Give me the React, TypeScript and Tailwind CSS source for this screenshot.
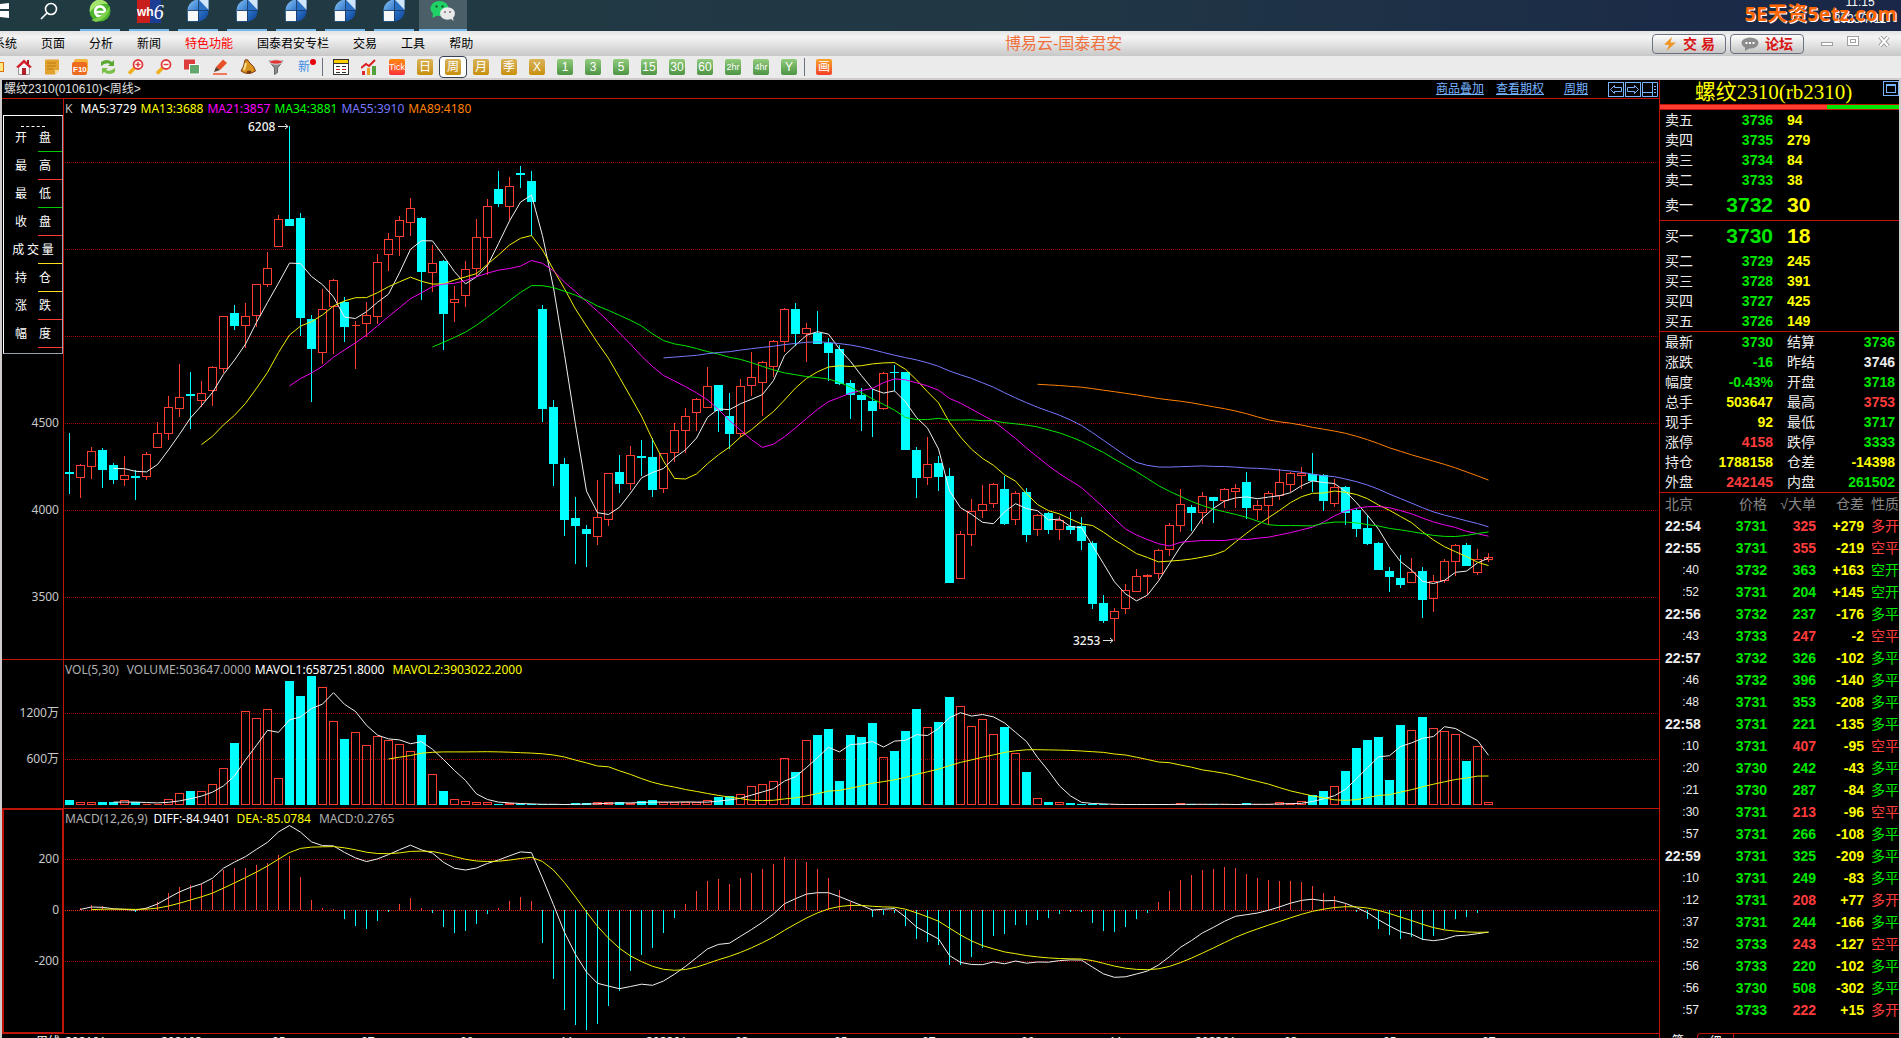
import React from 'react';

// direction (1 = up, 0 = down), high, body top, body bottom, low, volume bar height.
// All prices are rows measured from the top of the price pane.
const bars: number[][] = [
  [0, 333, 372, 374, 394, 5], [1, 364, 365, 378, 398, 3], [1, 347, 351, 367, 379, 3], [0, 348, 350, 370, 388, 3],
  [0, 363, 365, 380, 384, 3], [1, 356, 375, 380, 386, 5], [0, 370, 376, 378, 400, 3], [1, 352, 354, 377, 380, 1],
  [1, 322, 333, 348, 348, 1], [1, 296, 307, 334, 340, 6], [1, 264, 297, 309, 317, 12], [0, 272, 294, 296, 329, 14],
  [1, 281, 293, 301, 307, 14], [1, 266, 267, 291, 306, 21], [1, 216, 216, 269, 273, 37], [0, 205, 213, 226, 230, 62],
  [1, 203, 216, 226, 248, 94], [1, 184, 184, 216, 227, 87], [1, 152, 168, 185, 187, 96], [1, 115, 119, 147, 147, 27],
  [0, 26, 119, 126, 126, 124], [0, 113, 118, 218, 236, 109], [0, 215, 219, 249, 302, 129], [1, 189, 209, 253, 264, 118],
  [1, 179, 180, 207, 254, 84], [0, 197, 202, 227, 242, 66], [1, 221, 225, 226, 269, 73], [1, 202, 215, 224, 237, 60],
  [1, 154, 162, 217, 224, 69], [1, 133, 139, 155, 171, 65], [1, 116, 120, 137, 156, 61], [1, 98, 108, 123, 136, 54],
  [0, 117, 118, 172, 200, 70], [1, 145, 163, 173, 192, 31], [0, 160, 161, 214, 250, 14], [1, 186, 199, 203, 222, 6],
  [1, 161, 169, 196, 207, 4], [1, 119, 137, 169, 176, 3], [1, 99, 106, 138, 175, 3], [0, 71, 89, 104, 107, 1],
  [1, 77, 86, 107, 120, 2], [0, 66, 73, 75, 88, 1], [0, 71, 81, 102, 136, 1], [0, 205, 209, 309, 322, 1],
  [0, 300, 307, 364, 386, 1], [0, 358, 364, 420, 436, 1], [0, 397, 418, 426, 464, 2], [0, 425, 429, 434, 467, 2],
  [1, 380, 417, 437, 445, 3], [1, 373, 373, 420, 426, 3], [0, 355, 372, 384, 393, 3], [1, 346, 355, 384, 390, 2],
  [0, 340, 356, 358, 376, 4], [0, 338, 357, 390, 397, 5], [1, 353, 353, 389, 393, 3], [1, 323, 330, 353, 362, 3],
  [1, 308, 316, 331, 353, 3], [1, 298, 299, 313, 331, 3], [1, 267, 286, 308, 308, 5], [0, 285, 285, 311, 332, 8],
  [0, 293, 316, 334, 349, 9], [1, 279, 286, 334, 337, 11], [1, 252, 277, 286, 296, 19], [1, 261, 262, 283, 316, 21],
  [1, 240, 241, 267, 277, 24], [1, 208, 209, 242, 252, 47], [0, 203, 209, 234, 246, 33], [1, 223, 228, 234, 262, 65],
  [0, 211, 233, 244, 244, 70], [0, 238, 243, 253, 281, 76], [0, 245, 249, 284, 285, 24], [0, 280, 283, 295, 319, 70],
  [0, 288, 295, 300, 331, 68], [0, 289, 301, 311, 337, 82], [1, 272, 273, 309, 310, 48], [0, 265, 272, 273, 291, 54],
  [0, 272, 272, 350, 350, 74], [0, 347, 350, 378, 398, 96], [1, 337, 364, 378, 385, 78], [0, 356, 363, 377, 391, 83],
  [0, 368, 376, 483, 483, 108], [1, 431, 434, 479, 479, 99], [1, 399, 411, 435, 446, 79], [1, 385, 404, 411, 418, 86],
  [1, 383, 384, 404, 408, 71], [0, 376, 389, 424, 425, 78], [1, 391, 393, 420, 425, 52], [0, 388, 392, 435, 442, 33],
  [1, 414, 415, 430, 436, 7], [0, 412, 413, 430, 434, 3], [1, 416, 420, 430, 440, 3], [0, 412, 426, 430, 434, 2],
  [0, 417, 426, 441, 450, 1], [0, 441, 443, 504, 509, 1], [0, 495, 503, 521, 523, 1], [1, 508, 511, 519, 541, 1],
  [1, 484, 490, 509, 514, 1], [1, 469, 476, 492, 492, 1], [1, 474, 475, 477, 495, 1], [1, 449, 450, 474, 479, 1],
  [1, 423, 425, 450, 456, 1], [1, 389, 404, 426, 432, 2], [0, 405, 407, 413, 431, 1], [1, 392, 396, 413, 424, 1],
  [0, 397, 397, 401, 423, 1], [1, 388, 389, 401, 408, 1], [1, 384, 388, 392, 408, 1], [0, 372, 382, 408, 419, 2],
  [1, 400, 405, 410, 420, 1], [1, 391, 393, 406, 425, 1], [1, 369, 382, 396, 400, 3], [1, 372, 373, 385, 392, 2],
  [1, 367, 373, 376, 389, 4], [0, 353, 374, 381, 392, 10], [0, 374, 375, 401, 411, 14], [1, 379, 387, 404, 407, 19],
  [0, 386, 387, 413, 425, 34], [0, 408, 410, 429, 437, 57], [0, 415, 428, 444, 445, 65], [0, 442, 443, 470, 470, 68],
  [0, 467, 471, 477, 492, 25], [0, 455, 478, 485, 488, 80], [1, 458, 472, 483, 483, 75], [0, 467, 471, 500, 518, 88],
  [1, 475, 481, 499, 512, 77], [1, 459, 461, 481, 483, 74], [1, 444, 445, 462, 476, 71], [0, 443, 445, 466, 466, 44],
  [1, 449, 459, 473, 475, 59], [1, 453, 457, 460, 462, 3],
];

const STEP = 11;
const UP = '#ff3c32';
const DOWN = '#00ffff';
const VOL_BASE = 145;
const MACD_ZERO = 101;

const barX = (i: number) => 5 + i * STEP;
const closes = bars.map((b) => (b[0] ? b[2] : b[3]));
const volumes = bars.map((b) => b[5]);

const sma = (values: number[], n: number, toY: (v: number) => number) => {
  const points: string[] = [];
  for (let i = n - 1; i < values.length; i++) {
    const sum = values.slice(i - n + 1, i + 1).reduce((a, b) => a + b, 0);
    points.push(`${barX(i) + 0.5},${(toY(sum / n) + 0.5).toFixed(1)}`);
  }
  return points.join(' ');
};

const ema = (values: number[], n: number) => {
  const out = [values[0]];
  for (let i = 1; i < values.length; i++) {
    out.push((values[i] * 2 + out[i - 1] * (n - 1)) / (n + 1));
  }
  return out;
};

// the MACD pane is drawn at a larger scale than the price pane
const fast = ema(closes, 12);
const slow = ema(closes, 26);
const diff = fast.map((v, i) => (slow[i] - v) * 1.4655);
const dea = ema(diff, 9);
const macd = diff.map((v, i) => (v - dea[i]) * 2);

const toLine = (values: number[], from: number) =>
  values
    .map((v, i) => `${barX(i) + 0.5},${(MACD_ZERO + 0.5 - v).toFixed(1)}`)
    .slice(from)
    .join(' ');

const averages = [
  { n: 5, color: '#f0f0f0' },
  { n: 13, color: '#f0f000' },
  { n: 21, color: '#f000f0' },
  { n: 34, color: '#00e600' },
  { n: 55, color: '#7878ff' },
  { n: 89, color: '#ff8000' },
];

const menus = ['系统', '页面', '分析', '新闻', '特色功能', '国泰君安专栏', '交易', '工具', '帮助'];
const yellowPeriods = ['日', '周', '月', '季', 'X'];
const greenPeriods = ['1', '3', '5', '15', '30', '60', '2hr', '4hr', 'Y'];

const fields = [
  { name: '开　盘', line: 'bg-[#00c800]' },
  { name: '最　高', line: 'bg-[#ff3c32]' },
  { name: '最　低', line: 'bg-[#00c800]' },
  { name: '收　盘', line: 'bg-[#ff3c32]' },
  { name: '成 交 量', line: 'bg-yellow-300' },
  { name: '持　仓', line: 'bg-yellow-300' },
  { name: '涨　跌', line: 'bg-[#ff3c32]' },
  { name: '幅　度', line: 'bg-[#ff3c32]' },
];

const dates: [number, string][] = [
  [1, '202101'], [97, '202103'], [208, '05'], [297, '07'], [396, '09'], [496, '11'], [582, '202201'], [671, '03'],
  [770, '05'], [858, '07'], [957, '09'], [1045, '11'], [1131, '202301'], [1220, '03'], [1319, '05'], [1418, '07'],
];

const G = 'text-[#00e600]';
const R = 'text-[#ff3c3c]';
const Y = 'text-[#ffff00]';
const W = 'text-[#ececec]';

const asks = [['卖五', '3736', '94'], ['卖四', '3735', '279'], ['卖三', '3734', '84'], ['卖二', '3733', '38']];
const bids = [['买二', '3729', '245'], ['买三', '3728', '391'], ['买四', '3727', '425'], ['买五', '3726', '149']];

const stats = [
  ['最新', '3730', G, '结算', '3736', G],
  ['涨跌', '-16', G, '昨结', '3746', W],
  ['幅度', '-0.43%', G, '开盘', '3718', G],
  ['总手', '503647', Y, '最高', '3753', R],
  ['现手', '92', Y, '最低', '3717', G],
  ['涨停', '4158', R, '跌停', '3333', G],
  ['持仓', '1788158', Y, '仓差', '-14398', Y],
  ['外盘', '242145', R, '内盘', '261502', G],
];

const ticks = [
  ['22:54', '3731', '325', '+279', '多开', R],
  ['22:55', '3731', '355', '-219', '空平', R],
  [':40', '3732', '363', '+163', '空开', G],
  [':52', '3731', '204', '+145', '空开', G],
  ['22:56', '3732', '237', '-176', '多平', G],
  [':43', '3733', '247', '-2', '空平', R],
  ['22:57', '3732', '326', '-102', '多平', G],
  [':46', '3732', '396', '-140', '多平', G],
  [':48', '3731', '353', '-208', '多平', G],
  ['22:58', '3731', '221', '-135', '多平', G],
  [':10', '3731', '407', '-95', '空平', R],
  [':20', '3730', '242', '-43', '多平', G],
  [':21', '3730', '287', '-84', '多平', G],
  [':30', '3731', '213', '-96', '空平', R],
  [':57', '3731', '266', '-108', '多平', G],
  ['22:59', '3731', '325', '-209', '多平', G],
  [':10', '3731', '249', '-83', '多平', G],
  [':12', '3731', '208', '+77', '多开', R],
  [':37', '3731', '244', '-166', '多平', G],
  [':52', '3733', '243', '-127', '空平', R],
  [':56', '3733', '220', '-102', '多平', G],
  [':56', '3730', '508', '-302', '多平', G],
  [':57', '3733', '222', '+15', '多开', R],
];

const QuoteIcon: React.FC = () => (
  <svg width="24" height="24" viewBox="0 0 24 24">
    <defs>
      <linearGradient id="quoteBlue" x1="0" y1="0" x2="1" y2="1">
        <stop offset="0" stopColor="#8cc4f4" />
        <stop offset="0.5" stopColor="#2f78cc" />
        <stop offset="1" stopColor="#0b3f94" />
      </linearGradient>
    </defs>
    <path d="M9 2H22.500V13Q22 22 13 23.500H1.500V12Q2 5 9 2Z" fill="url(#quoteBlue)" />
    <path d="M13 2H22.500V12Z" fill="#cfe6fa" />
    <path d="M13 2V13H22.500V12Z" fill="#2a70c4" />
    <rect x="2" y="12.500" width="10" height="10.500" fill="#f8f8f8" />
    <path d="M12.500 2V23.500M2 12.500H22.500" stroke="#16335a" strokeWidth="0.800" />
  </svg>
);

const Taskbar: React.FC = () => (
  <header className="relative flex h-[31px] shrink-0 overflow-hidden bg-linear-to-r from-[#203a42] via-[#213844] to-[#1a2748]">
    <button aria-label="开始" className="w-[31px]">
      <svg width="10" height="31" viewBox="0 0 10 31">
        <path d="M0 4L9 3V9H0ZM0 11H9V18L0 17Z" fill="#fff" />
      </svg>
    </button>
    <button aria-label="搜索" className="flex w-[49px] pl-2">
      <svg width="20" height="22" viewBox="0 0 20 22" fill="none" stroke="#fff" strokeWidth="1.600">
        <circle cx="12" cy="9" r="5.500" />
        <path d="M8 13L2 19" />
      </svg>
    </button>
    <div className="flex gap-[9px]">
      <button aria-label="浏览器" className="flex h-full w-10 flex-col items-center border-b-2 border-[#76b9ed]">
        <svg width="24" height="24" viewBox="0 0 24 24">
          <circle cx="12" cy="11" r="10.500" fill="#4cb52c" />
          <path d="M2 12A10 10 0 0 1 20 4Q10 2 2 12Z" fill="#a4e46c" />
          <path d="M7 12H17A5 5 0 1 0 15.500 15" fill="none" stroke="#fff" strokeWidth="2.600" />
          <path d="M3 20Q14 18 22 6Q21 18 8 22Z" fill="#7fd04a" />
        </svg>
      </button>
      <button aria-label="文华" className="flex h-full w-10 flex-col items-center border-b-2 border-[#76b9ed]">
        <span className="flex h-[23px] w-6 items-center bg-linear-to-r from-[#c81e1e] from-55% to-[#1d3d94] to-55% text-xs font-bold text-white">
          wh<i className="font-['Liberation_Serif',serif] text-xl font-normal">6</i>
        </span>
      </button>
      {[1, 2, 3, 4, 5].map((n) => (
        <button key={n} aria-label={`行情 ${n}`} className="flex h-full w-10 flex-col items-center border-b-2 border-[#76b9ed]">
          <span className="-mt-0.5">
            <QuoteIcon />
          </span>
        </button>
      ))}
    </div>
    <button aria-label="微信" className="ml-[5px] flex w-12 justify-center border-b-2 border-[#76b9ed] bg-[#4b5f68]">
      <svg width="26" height="22" viewBox="0 0 26 22">
        <ellipse cx="9.500" cy="8.500" rx="9" ry="7.500" fill="#1fd366" />
        <path d="M3 13L2.500 18L8 15Z" fill="#1fd366" />
        <ellipse cx="17.500" cy="13.500" rx="7.500" ry="6.200" fill="#e9e9e9" />
        <path d="M20 18L23.500 21L23 17Z" fill="#e9e9e9" />
        <g fill="#14602f">
          <circle cx="6.500" cy="6.500" r="1.200" />
          <circle cx="12.500" cy="6.500" r="1.200" />
        </g>
        <g fill="#777">
          <circle cx="15" cy="12" r="1" />
          <circle cx="20" cy="12" r="1" />
        </g>
      </svg>
    </button>
    <div className="-mt-1.5 ml-auto w-[82px] text-center text-xs leading-[17px] text-white">
      <div>11:15</div>
      <div>2023/7/11</div>
    </div>
    <div className="absolute top-0.5 right-1 font-['Noto_Sans','Noto_Sans_CJK_SC',sans-serif] text-xl leading-6 font-bold text-[#ff6600] [text-shadow:1px_1px_0_#fff]">
      5E天资5etz.com
    </div>
  </header>
);

const MenuBar: React.FC = () => (
  <div className="flex h-[25px] shrink-0 items-center bg-linear-to-b from-[#e4e4e4] via-[#f4f4f4] via-25% to-[#c8c8c8] text-xs text-black">
    <nav className="-ml-[7px] flex flex-[13] gap-6">
      {menus.map((m) => (
        <button key={m} className={m === '特色功能' ? 'text-[#ff0000]' : ''}>
          {m}
        </button>
      ))}
    </nav>
    <h1 className="w-[120px] text-center text-base leading-6 whitespace-nowrap text-[#f0703c]">博易云-国泰君安</h1>
    <div className="flex flex-[10] justify-end">
      <div className="flex gap-1 pr-3">
        <button className="flex h-5 w-[74px] items-center justify-center gap-1.5 rounded-sm border border-gray-500 bg-linear-to-b from-white to-[#c4c4c4] text-sm font-bold text-[#d81414]">
          <svg width="14" height="14" viewBox="0 0 14 14" fill="#f09628">
            <path d="M9 0L1 7.500L6 8L3.500 14L13 5.500L7.500 5.500Z" />
          </svg>
          交 易
        </button>
        <button className="flex h-5 w-[74px] items-center justify-center gap-1.5 rounded-sm border border-gray-500 bg-linear-to-b from-white to-[#c4c4c4] text-sm font-bold text-[#d81414]">
          <svg width="18" height="14" viewBox="0 0 18 14">
            <ellipse cx="9" cy="6" rx="8.500" ry="5.500" fill="#8c8c8c" />
            <path d="M4 9L4 14L9 11Z" fill="#8c8c8c" />
            <path d="M4.500 6H6.500M8 6H10M11.500 6H13.500" stroke="#fff" strokeWidth="2" />
          </svg>
          论坛
        </button>
      </div>
      <div className="flex h-4 gap-1 pr-px">
        <button aria-label="最小化" className="flex h-4 w-[22px] items-center justify-center">
          <svg width="13" height="12" viewBox="0 0 13 12">
            <rect x="0.500" y="6.500" width="11" height="3" fill="#fff" stroke="#a0a0a0" />
          </svg>
        </button>
        <button aria-label="最大化" className="flex h-4 w-[22px] items-center justify-center">
          <svg width="12" height="11" viewBox="0 0 12 11" fill="#fff" stroke="#a0a0a0">
            <rect x="0.500" y="0.500" width="11" height="9" />
            <rect x="3.500" y="3.500" width="5" height="3" />
          </svg>
        </button>
        <button aria-label="关闭" className="flex h-4 w-8 items-center justify-center">
          <svg width="12" height="11" viewBox="0 0 12 11">
            <path d="M2 1L10 10M10 1L2 10" stroke="#989898" strokeWidth="4" />
            <path d="M2 1L10 10M10 1L2 10" stroke="#fff" strokeWidth="2" />
          </svg>
        </button>
      </div>
    </div>
  </div>
);

const toolIcons: { name: string; art: React.ReactNode }[] = [
  {
    name: '首页',
    art: (
      <>
        <path d="M2.500 8V15.500H13.500V8L8 3Z" fill="#f4f4f4" stroke="#999" />
        <path d="M0 8L8 0.500L16 8L13.500 9L8 4L2.500 9Z" fill="#d4202c" />
        <rect x="11" y="1" width="2" height="4" fill="#b01820" />
        <rect x="6" y="9" width="4" height="7" fill="#b4202a" />
      </>
    ),
  },
  {
    name: '备忘',
    art: (
      <>
        <path d="M1 1.500Q1 0.500 2 0.500H15V11L11 15.500H1Z" fill="#e2a22e" />
        <path d="M15 11H11V15.500Z" fill="#f8dc9c" />
        <path d="M3 4H12M3 7H12M3 10H9" stroke="#b87814" />
      </>
    ),
  },
  {
    name: 'F10',
    art: (
      <>
        <rect x="2" y="0" width="14" height="13" rx="2" fill="#f4b43c" />
        <rect x="0" y="3" width="15" height="13" rx="2" fill="#ee6a1e" />
        <text x="1" y="13" fontSize="8" fontWeight="bold" fill="#fff">
          F10
        </text>
      </>
    ),
  },
  {
    name: '刷新',
    art: (
      <>
        <path d="M1 7V3Q7 -1 12 3L14 1V7H8L10 5Q6 3 1 7Z" fill="#5aa832" />
        <path d="M15 9V13Q9 17 4 13L2 15V9H8L6 11Q10 13 15 9Z" fill="#7cc04c" />
      </>
    ),
  },
  {
    name: '放大',
    art: (
      <>
        <path d="M1 14.500L7 8.500" stroke="#f0b01e" strokeWidth="3.500" />
        <circle cx="10" cy="5.500" r="4.500" fill="#fff" stroke="#e03c3c" strokeWidth="1.800" />
        <path d="M7.500 5.500H12.500M10 3V8" stroke="#e03c3c" strokeWidth="1.500" />
      </>
    ),
  },
  {
    name: '缩小',
    art: (
      <>
        <path d="M1 14.500L7 8.500" stroke="#f0b01e" strokeWidth="3.500" />
        <circle cx="10" cy="5.500" r="4.500" fill="#fff" stroke="#e03c3c" strokeWidth="1.800" />
        <path d="M7.500 5.500H12.500" stroke="#e03c3c" strokeWidth="1.500" />
      </>
    ),
  },
  {
    name: '叠加',
    art: (
      <>
        <rect x="0" y="0.500" width="11" height="10" fill="#dc3c3c" />
        <rect x="5.500" y="5.500" width="10" height="9.500" fill="#62a86c" stroke="#fff" />
      </>
    ),
  },
  {
    name: '画笔',
    art: (
      <>
        <path d="M4 8L11 0.500L15 4L8 11Z" fill="#e85028" />
        <path d="M4 8L8 11L2 13Z" fill="#5a3a28" />
        <path d="M1 15H15" stroke="#f0502c" strokeWidth="1.500" />
      </>
    ),
  },
  {
    name: '预警',
    art: (
      <>
        <path d="M5 1Q8 -0.500 9 3Q15 8 15.500 12Q8 17 1 12Q4 8 5 1Z" fill="#d8941e" stroke="#7c3a12" />
        <path d="M6 4Q5 8 4 11" stroke="#fbe08c" strokeWidth="2" fill="none" />
        <ellipse cx="9" cy="13" rx="2.500" ry="1.500" fill="#7c3a12" />
      </>
    ),
  },
  {
    name: '筛选',
    art: (
      <>
        <path d="M1 2L6.500 9V15.500L9.500 13.500V9L15 2Z" fill="#8a8a8a" stroke="#666" />
        <ellipse cx="8" cy="3" rx="6.500" ry="2.200" fill="#e03434" stroke="#ddd" />
      </>
    ),
  },
];

const tileCls = 'flex h-4 w-4 items-center justify-center rounded-xs text-xs leading-none text-white';

const Toolbar: React.FC = () => (
  <div className="flex h-6 shrink-0 items-center border-b-2 border-[#d0cccb] bg-[#ebebeb]">
    <div className="mr-1.5 h-2.5 w-1 border border-l-0 border-amber-600 bg-amber-200" />
    {toolIcons.map((t) => (
      <button key={t.name} aria-label={t.name} className="flex w-7 justify-center">
        <svg width="16" height="16" viewBox="0 0 16 16">
          {t.art}
        </svg>
      </button>
    ))}
    <button className="relative w-7 text-center text-xs text-[#3c8ce6]">
      新
      <span className="absolute top-0 right-0.5 h-1.5 w-1.5 rounded-full bg-red-600" />
    </button>
    <div className="mx-1 h-[18px] w-px bg-gray-500" />
    <button aria-label="报价" className="flex w-7 justify-center">
      <svg width="16" height="16" viewBox="0 0 16 16">
        <rect x="0.500" y="0.500" width="15" height="15" fill="#fff" stroke="#333" />
        <rect x="1" y="1" width="14" height="3" fill="#ffcc00" />
        <path d="M1 4.500H15" stroke="#333" />
        <path d="M3 7.500H7M9 7.500H13M3 13.500H7M9 13.500H13" stroke="#333" />
        <path d="M3 10.500H7M9 10.500H13" stroke="#e02020" />
      </svg>
    </button>
    <button aria-label="分时" className="flex w-7 justify-center">
      <svg width="16" height="16" viewBox="0 0 16 16">
        <rect x="1" y="12" width="3" height="4" fill="#dc2c2c" />
        <rect x="6" y="9" width="3" height="7" fill="#e8a01e" />
        <rect x="11" y="7" width="4" height="9" fill="#54a03c" />
        <path d="M0 9L5 5L8 7L14 1" fill="none" stroke="#dc1c1c" strokeWidth="2" />
      </svg>
    </button>
    <button className="flex w-7 justify-center">
      <span className="flex h-4 w-4 items-center justify-center rounded-xs bg-linear-to-b from-orange-400 to-red-500 text-[9px] leading-none text-white">
        Tick
      </span>
    </button>
    {yellowPeriods.map((p) => (
      <button
        key={p}
        className={
          p === '周'
            ? 'flex h-[22px] w-7 items-center justify-center rounded-sm border border-gray-700 bg-white'
            : 'flex w-7 justify-center'
        }
      >
        <span className={`${tileCls} bg-linear-to-b from-[#d8b456] to-[#c89000]`}>{p}</span>
      </button>
    ))}
    {greenPeriods.map((p) => (
      <button key={p} className="flex w-7 justify-center">
        <span className={`${tileCls} bg-linear-to-b from-[#92cc7c] to-[#4c9444] ${p.length > 2 ? 'text-[9px]' : ''}`}>{p}</span>
      </button>
    ))}
    <div className="mr-[5px] ml-px h-[18px] w-px bg-gray-500" />
    <button className="flex w-7 justify-center">
      <span className={`${tileCls} bg-linear-to-b from-[#f8a428] to-[#f43c28]`}>画</span>
    </button>
  </div>
);

interface PaneProps {
  height: string;
  labels: [number, string][];
  grid: number[];
  zero?: number;
  active?: boolean;
  legend: [string, string][];
  children: React.ReactNode;
}

const Pane: React.FC<PaneProps> = ({ height, labels, grid, zero, active, legend, children }) => (
  <section className={`flex shrink-0 border-b border-[#c01408] ${height}`}>
    <div className={`w-[62px] shrink-0 border-[#c01408] ${active ? 'border-x-2 border-y' : 'border-r'}`}>
      <svg className="h-full w-full" fill="#c8c8c8" fontSize="12" textAnchor="end">
        {labels.map(([y, text]) => (
          <text key={text} x={active ? 55 : 57} y={y + (active ? 3 : 4)}>
            {text}
          </text>
        ))}
      </svg>
    </div>
    <div className="relative min-w-0 flex-1">
      <svg className="absolute inset-0 h-full w-full">
        {grid.map((y) => (
          <line key={y} x1="1" x2="100%" y1={y + 0.5} y2={y + 0.5} stroke={y === zero ? '#f02814' : '#a00000'} strokeDasharray="1 1" shapeRendering="crispEdges" />
        ))}
        {children}
      </svg>
      <div className="relative flex gap-1 pl-px leading-[19px] whitespace-nowrap">
        {legend.map(([text, cls]) => (
          <span key={text} className={cls}>
            {text}
          </span>
        ))}
      </div>
    </div>
  </section>
);

const PricePlot: React.FC = () => (
  <g transform="translate(0 1)">
    <g shapeRendering="crispEdges">
      {bars.map(([up, high, top, bottom, low], i) => {
        const x = barX(i);
        return up ? (
          <g key={i} fill="none" stroke={UP}>
            <path d={`M${x + 0.5} ${high}V${top}M${x + 0.5} ${bottom}V${low}`} />
            <path d={`M${x - 3.5} ${top + 0.5}h8v${bottom - top - 1}h-8z`} />
          </g>
        ) : (
          <g key={i} fill={DOWN}>
            <rect x={x} y={high} width="1" height={low - high} />
            <rect x={x - 4} y={top} width="9" height={bottom - top} />
          </g>
        );
      })}
    </g>
    {averages.map((a) => (
      <polyline key={a.n} points={sma(closes, a.n, (v) => v)} fill="none" stroke={a.color} />
    ))}
    <g fill="#f0f0f0" fontSize="12" fontWeight="500" stroke="none">
      <text x="184" y="31">6208</text>
      <text x="1009" y="545">3253</text>
    </g>
    <path d="M214 26.500H224M221 24L224 26.500L221 29M1039 540.500H1049M1046 538L1049 540.500L1046 543" fill="none" stroke="#e0e0e0" />
  </g>
);

const VolumePlot: React.FC = () => (
  <>
    <g shapeRendering="crispEdges">
      {bars.map((b, i) =>
        b[0] ? (
          <path key={i} d={`M${barX(i) - 3.5} ${VOL_BASE - b[5] + 0.5}h8v${b[5] - 1}h-8z`} fill="none" stroke={UP} />
        ) : (
          <rect key={i} x={barX(i) - 4} y={VOL_BASE - b[5]} width="9" height={b[5]} fill={DOWN} />
        ),
      )}
    </g>
    <polyline points={sma(volumes, 5, (v) => VOL_BASE - v)} fill="none" stroke="#f0f0f0" />
    <polyline points={sma(volumes, 30, (v) => VOL_BASE - v)} fill="none" stroke="#f0f000" />
  </>
);

const MacdPlot: React.FC = () => (
  <>
    <g shapeRendering="crispEdges">
      {macd.map((v, i) => {
        const h = Math.round(Math.abs(v));
        return v > 0 ? (
          <rect key={i} x={barX(i)} y={MACD_ZERO - h} width="1" height={h} fill={UP} />
        ) : (
          <rect key={i} x={barX(i)} y={MACD_ZERO} width="1" height={h} fill={DOWN} />
        );
      })}
    </g>
    <polyline points={toLine(diff, 1)} fill="none" stroke="#f0f0f0" />
    <polyline points={toLine(dea, 2)} fill="none" stroke="#f0f000" />
  </>
);

const FieldBox: React.FC = () => (
  <div className="absolute top-[35px] left-px w-[60px] border border-r-gray-400 border-b-gray-400 border-l-white border-t-white bg-black pb-0.5 font-['Noto_Sans_CJK_SC',sans-serif] text-xs text-white">
    <div className="mx-auto mt-2.5 w-6 border-t border-dashed border-white" />
    {fields.map((f) => (
      <div key={f.name} className="flex h-7 flex-col">
        <span className="text-center leading-5 whitespace-pre">{f.name}</span>
        <span className={`mt-1 ml-auto h-px w-6 ${f.line}`} />
      </div>
    ))}
  </div>
);

const ChartArea: React.FC = () => (
  <main className="relative flex min-w-0 flex-1 flex-col">
    <div className="flex h-[19px] shrink-0 items-center border-b border-[#c01408] pl-0.5 text-xs">
      <h2 className="flex-1 text-[#e0e0e0]">螺纹2310(010610)&lt;周线&gt;</h2>
      <div className="flex text-[#78b4ff] underline">
        <a href="#overlay">商品叠加</a>
        <a href="#options" className="ml-3">
          查看期权
        </a>
        <a href="#period" className="ml-5">
          周期
        </a>
      </div>
      <div className="mr-px ml-5 flex gap-px">
        <button aria-label="向左">
          <svg width="16" height="15" viewBox="0 0 16 15" fill="none" stroke="#78b4ff">
            <rect x="0.500" y="0.500" width="15" height="14" />
            <path d="M2.500 7.500L6.500 3.500V5.500H13.500V9.500H6.500V11.500Z" />
          </svg>
        </button>
        <button aria-label="向右">
          <svg width="16" height="15" viewBox="0 0 16 15" fill="none" stroke="#78b4ff">
            <rect x="0.500" y="0.500" width="15" height="14" />
            <path d="M13.500 7.500L9.500 3.500V5.500H2.500V9.500H9.500V11.500Z" />
          </svg>
        </button>
        <button aria-label="布局">
          <svg width="16" height="15" viewBox="0 0 16 15" fill="none" stroke="#78b4ff">
            <path d="M0.500 0.500H15.500V14.500H0.500ZM10.500 0.500V14.500M0.500 10.500H10.500M12 4.500H14M12 7.500H14M12 10.500H14" />
          </svg>
        </button>
      </div>
    </div>
    <div className="relative flex flex-1 flex-col font-['Noto_Sans','Noto_Sans_CJK_SC',sans-serif] text-xs">
      <Pane
        height="h-[561px]"
        labels={[[324, '4500'], [411, '4000'], [498, '3500']]}
        grid={[63, 150, 237, 324, 411, 498]}
        legend={[
          ['K', 'pr-1 text-[#c0c0c0]'],
          ['MA5:3729', 'text-white'],
          ['MA13:3688', 'text-[#ffff00]'],
          ['MA21:3857', 'text-[#ff00ff]'],
          ['MA34:3881', 'text-[#00ff00]'],
          ['MA55:3910', 'text-[#7878ff]'],
          ['MA89:4180', 'text-[#ff8000]'],
        ]}
      >
        <PricePlot />
      </Pane>
      <Pane
        height="h-[149px]"
        labels={[[53, '1200万'], [99, '600万']]}
        grid={[53, 99]}
        legend={[
          ['VOL(5,30)', 'pr-1 text-[#b0b0b0]'],
          ['VOLUME:503647.0000', 'text-[#b0b0b0]'],
          ['MAVOL1:6587251.8000', 'pr-1 text-white'],
          ['MAVOL2:3903022.2000', 'text-[#ffff00]'],
        ]}
      >
        <VolumePlot />
      </Pane>
      <Pane
        height="h-[225px]"
        labels={[[50, '200'], [101, '0'], [152, '-200']]}
        grid={[50, 101, 152]}
        zero={101}
        active
        legend={[
          ['MACD(12,26,9)', 'pr-0.5 text-[#b0b0b0]'],
          ['DIFF:-84.9401', 'pr-0.5 text-white'],
          ['DEA:-85.0784', 'pr-1 text-[#ffff00]'],
          ['MACD:0.2765', 'text-[#b0b0b0]'],
        ]}
      >
        <MacdPlot />
      </Pane>
      <div className="flex h-4 leading-4 text-white">
        <span className="w-[62px] pr-1 text-right">周线</span>
        <svg className="h-4 flex-1" fill="#fff" fontSize="12">
          {dates.map(([x, text]) => (
            <text key={x} x={x} y="12">
              {text}
            </text>
          ))}
        </svg>
      </div>
    </div>
    <FieldBox />
  </main>
);

const BookRow: React.FC<{ row: string[]; big?: boolean }> = ({ row, big }) => (
  <div className={`grid grid-cols-[45px_67px_1fr] items-center pl-[5px] ${big ? 'h-[30px]' : 'h-5'}`}>
    <span className={W}>{row[0]}</span>
    <b className={`pr-1 text-right ${G} ${big ? 'text-[21px]' : ''}`}>{row[1]}</b>
    <b className={`pl-2.5 ${Y} ${big ? 'text-[21px]' : ''}`}>{row[2]}</b>
  </div>
);

const QuotePanel: React.FC = () => (
  <aside className="flex w-60 shrink-0 flex-col border-l border-[#c01408] text-sm">
    <div className="relative h-6 shrink-0 text-center">
      <h2 className="pr-3 font-['Liberation_Serif','Noto_Sans_CJK_SC',serif] text-[21px] leading-6 text-[#ffff00]">螺纹2310(rb2310)</h2>
      <button aria-label="展开" className="absolute top-px right-0 h-[15px] w-4 border border-[#78b4ff] p-0.5">
        <span className="block h-full border border-t-2 border-[#78b4ff]" />
      </button>
    </div>
    <div className="flex h-1.5 shrink-0 border-y border-[#c01408]">
      <div className="w-[70%] bg-[#ff3c32]" />
      <div className="flex-1 bg-[#00e600]" />
    </div>
    <div className="shrink-0 border-b border-[#c01408]">
      {asks.map((r) => (
        <BookRow key={r[0]} row={r} />
      ))}
      <BookRow row={['卖一', '3732', '30']} big />
    </div>
    <div className="shrink-0 border-b border-[#c01408]">
      <BookRow row={['买一', '3730', '18']} big />
      {bids.map((r) => (
        <BookRow key={r[0]} row={r} />
      ))}
    </div>
    <div className="shrink-0 border-b border-[#c01408]">
      {stats.map((s) => (
        <div key={s[0]} className="grid h-5 grid-cols-[45px_63px_14px_45px_1fr] items-center pr-1 pl-[5px]">
          <span className={W}>{s[0]}</span>
          <b className={`text-right ${s[2]}`}>{s[1]}</b>
          <span />
          <span className={W}>{s[3]}</span>
          <b className={`text-right ${s[5]}`}>{s[4]}</b>
        </div>
      ))}
    </div>
    <table className="w-full table-fixed text-right">
      <thead>
        <tr className="h-[22px] text-[#888]">
          <th className="w-[41px] pl-[5px] text-left font-normal">北京</th>
          <th className="w-[66px] font-normal">价格</th>
          <th className="w-[49px] font-normal whitespace-nowrap">√大单</th>
          <th className="w-12 font-normal">仓差</th>
          <th className="font-normal">性质</th>
        </tr>
      </thead>
      <tbody>
        {ticks.map((t, i) => (
          <tr key={i} className="h-[22px] font-bold">
            <td className={t[0].length > 3 ? `pl-[5px] text-left ${W}` : `pr-0.5 text-xs font-normal ${W}`}>{t[0]}</td>
            <td className={G}>{t[1]}</td>
            <td className={t[5]}>{t[2]}</td>
            <td className={Y}>{t[3]}</td>
            <td className={`font-normal ${t[5]}`}>{t[4]}</td>
          </tr>
        ))}
      </tbody>
    </table>
    <div className="mt-auto flex h-[5px] shrink-0 overflow-hidden text-xs leading-4 text-white">
      <button className="w-[37px] pl-3 text-left leading-4">笔</button>
      <button className="w-[37px] rounded-tl-sm border-t border-r border-l border-[#c01408] leading-4">细</button>
      <span className="flex-1 border-t border-[#c01408]" />
    </div>
  </aside>
);

const App: React.FC = () => {
  return (
    <div className="flex h-screen flex-col overflow-hidden bg-black font-['Liberation_Sans','Noto_Sans_CJK_SC',sans-serif]">
      <Taskbar />
      <MenuBar />
      <Toolbar />
      <div className="flex min-h-0 flex-1 overflow-hidden border-x-2 border-[#d0cccb]">
        <ChartArea />
        <QuotePanel />
      </div>
    </div>
  );
};

export default App;
